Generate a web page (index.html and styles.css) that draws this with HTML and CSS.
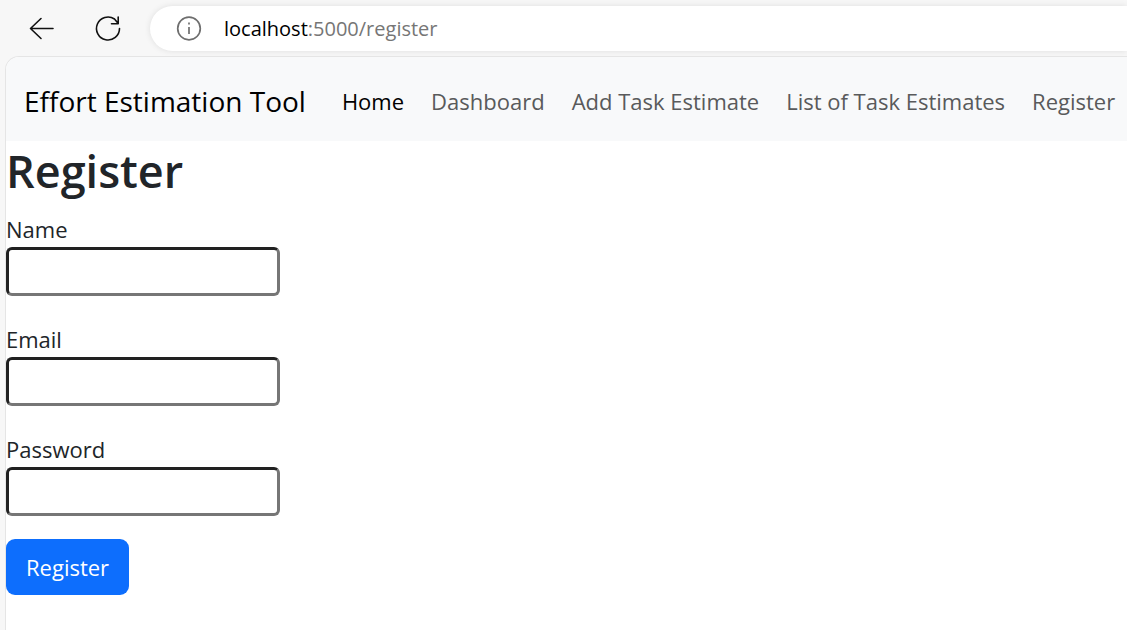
FILE: index.html
```html
<!DOCTYPE html>
<html lang="en">
<head>
<meta charset="utf-8">
<title>Register</title>
<link rel="stylesheet" href="styles.css">
</head>
<body>
<header class="toolbar">
  <button class="icon-button" type="button" aria-label="Back">
    <svg width="28" height="28" viewBox="0 0 28 28"><path d="M25 13.500H2.500M13 3.500L2.500 13.500l10.500 10"/></svg>
  </button>
  <button class="icon-button" type="button" aria-label="Refresh">
    <svg width="28" height="28" viewBox="0 0 28 28"><path d="M25.500 13.500A11.500 11.500 0 1 1 20.500 4L24 8.200M24.200 2v6.700h-6.700"/></svg>
  </button>
  <div class="address">
    <svg class="info" width="26" height="26" viewBox="0 0 26 26"><circle cx="13" cy="12.500" r="11.300"/><path d="M13 11v7"/><path d="M13 6.500v2"/></svg>
    <span class="url"><span class="host">localhost</span>:5000/register</span>
  </div>
</header>
<div class="page">
  <nav class="navbar">
    <a class="brand" href="#">Effort Estimation Tool</a>
    <a class="link active" href="#">Home</a>
    <a class="link" href="#">Dashboard</a>
    <a class="link" href="#">Add Task Estimate</a>
    <a class="link" href="#">List of Task Estimates</a>
    <a class="link" href="#">Register</a>
  </nav>
  <main>
    <h1 class="title">Register</h1>
    <form>
      <div class="fields">
        <div class="field"><label for="name">Name</label><input id="name" type="text"></div>
        <div class="field"><label for="email">Email</label><input id="email" type="email"></div>
        <div class="field"><label for="password">Password</label><input id="password" type="password"></div>
      </div>
      <button class="submit" type="submit">Register</button>
    </form>
  </main>
</div>
</body>
</html>
```
FILE: styles.css
```css
* { box-sizing: border-box; }
body {
  margin: 0;
  min-height: 100vh;
  display: flex;
  flex-direction: column;
  overflow-x: hidden;
  background: #f7f7f7;
  color: #212529;
  font-family: "Segoe UI", "Open Sans", "Noto Sans", sans-serif;
  font-size: 22px;
  line-height: 36px;
}
.toolbar {
  display: flex;
  align-items: center;
  padding: 6px 0 5px 28px;
}
.icon-button {
  display: flex;
  margin-right: 38px;
  padding: 0;
  border: 0;
  background: none;
}
.icon-button + .icon-button { margin-right: 28px; }
.icon-button svg {
  fill: none;
  stroke: #111;
  stroke-width: 1.6;
  stroke-linecap: round;
  stroke-linejoin: round;
}
.address {
  flex: 1;
  display: flex;
  align-items: center;
  gap: 22px;
  height: 45px;
  padding-left: 26px;
  border-radius: 23px 0 0 23px;
  background: #fff;
  box-shadow: 0 0 6px rgba(0, 0, 0, 0.1);
  color: #767676;
  font-size: 20px;
}
.info {
  fill: none;
  stroke: #6e6e6e;
  stroke-width: 1.7;
}
.host { color: #000; }
.page {
  flex: 1;
  margin-left: 5px;
  border: 1px solid #e5e5e5;
  border-width: 1px 0 0 1px;
  border-radius: 14px 0 0 0;
  overflow: hidden;
  background: #fff;
}
.navbar {
  display: flex;
  align-items: center;
  gap: 27px;
  height: 84px;
  padding: 3px 0 0 18px;
  background: #f8f9fa;
  white-space: nowrap;
}
.brand {
  margin-right: 9px;
  color: #000;
  font-size: 28px;
  text-decoration: none;
}
.link {
  color: #595a5b;
  text-decoration: none;
}
.active { color: #000; }
.title {
  margin: 0 0 10px;
  font-size: 45px;
  font-weight: 600;
  line-height: 60px;
}
.fields {
  display: flex;
  flex-direction: column;
  gap: 25px;
  margin-bottom: 23px;
}
.field {
  display: flex;
  flex-direction: column;
  align-items: flex-start;
}
.field input {
  width: 274px;
  height: 49px;
  padding: 2px 4px;
  border: 3px solid;
  border-color: #212121 #767676 #767676 #212121;
  border-radius: 6px;
  background: #fff;
  color: inherit;
  font: inherit;
}
.submit {
  padding: 10px 20px;
  border: 0;
  border-radius: 9px;
  background: #0d6efd;
  color: #fff;
  font: inherit;
}
```
